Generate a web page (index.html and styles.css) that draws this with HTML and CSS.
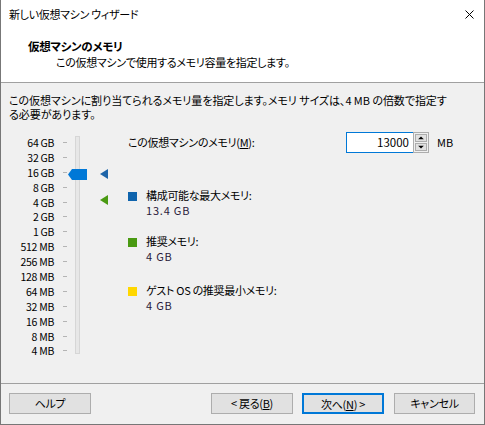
FILE: index.html
```html
<!DOCTYPE html>
<html lang="ja">
<head>
  <meta charset="UTF-8">
  <title>新しい仮想マシン ウィザード</title>
  <link rel="stylesheet" href="styles.css">
</head>
<body>

<div class="window">
  <div class="titlebar">
    <span class="title-text">新しい仮想マシン ウィザード</span>
    <span class="close">
      <svg width="9" height="9" viewBox="0 0 9 9"><path d="M0.5 0.5 L8.5 8.5 M8.5 0.5 L0.5 8.5" stroke="#000" stroke-width="1"/></svg>
    </span>
  </div>

  <div class="header">
    <h2 class="header-title">仮想マシンのメモリ</h2>
    <p class="header-sub">この仮想マシンで使用するメモリ容量を指定します。</p>
  </div>

  <div class="content">
    <p class="intro">この仮想マシンに割り当てられるメモリ量を指定します。メモリ サイズは、4 MB の倍数で指定す<br>る必要があります。</p>

    <div class="main">
      <div class="slider">
        <div class="scale">
          <div class="step"><span>64 GB</span><i></i></div>
          <div class="step"><span>32 GB</span><i></i></div>
          <div class="step"><span>16 GB</span><i></i></div>
          <div class="step"><span>8 GB</span><i></i></div>
          <div class="step"><span>4 GB</span><i></i></div>
          <div class="step"><span>2 GB</span><i></i></div>
          <div class="step"><span>1 GB</span><i></i></div>
          <div class="step"><span>512 MB</span><i></i></div>
          <div class="step"><span>256 MB</span><i></i></div>
          <div class="step"><span>128 MB</span><i></i></div>
          <div class="step"><span>64 MB</span><i></i></div>
          <div class="step"><span>32 MB</span><i></i></div>
          <div class="step"><span>16 MB</span><i></i></div>
          <div class="step"><span>8 MB</span><i></i></div>
          <div class="step"><span>4 MB</span><i></i></div>
        </div>
        <div class="track"></div>
        <svg class="thumb" width="19" height="11" viewBox="0 0 19 11"><path d="M0 5.5 L4 0 H19 V11 H4 Z" fill="#0078d7"/></svg>
        <svg class="mark mark-max" width="8" height="10" viewBox="0 0 8 10"><path d="M0 5 L8 0 V10 Z" fill="#1e64a8"/></svg>
        <svg class="mark mark-rec" width="8" height="10" viewBox="0 0 8 10"><path d="M0 5 L8 0 V10 Z" fill="#4a9a12"/></svg>
      </div>

      <div class="details">
        <div class="mem-row">
          <label class="mem-label">この仮想マシンのメモリ(<u>M</u>):</label>
          <div class="spin">
            <div class="spin-input">13000</div>
            <div class="spin-btns">
              <div class="spin-btn"><svg width="7" height="5" viewBox="0 0 7 5"><path d="M0 4 L3.5 0.5 L7 4 Z" fill="#000"/></svg></div>
              <div class="spin-btn"><svg width="7" height="5" viewBox="0 0 7 5"><path d="M0 1 L3.5 4.5 L7 1 Z" fill="#000"/></svg></div>
            </div>
          </div>
          <span class="unit">MB</span>
        </div>

        <div class="legend">
          <div class="legend-item">
            <span class="swatch blue"></span>
            <div>
              <div class="legend-name">構成可能な最大メモリ:</div>
              <div class="legend-value">13.4 GB</div>
            </div>
          </div>
          <div class="legend-item">
            <span class="swatch green"></span>
            <div>
              <div class="legend-name">推奨メモリ:</div>
              <div class="legend-value">4 GB</div>
            </div>
          </div>
          <div class="legend-item legend-last">
            <span class="swatch yellow"></span>
            <div>
              <div class="legend-name">ゲスト OS の推奨最小メモリ:</div>
              <div class="legend-value">4 GB</div>
            </div>
          </div>
        </div>
      </div>
    </div>
  </div>

  <div class="footer">
    <button class="btn">ヘルプ</button>
    <div class="footer-right">
      <button class="btn">&lt; 戻る(<u>B</u>)</button>
      <button class="btn btn-default">次へ(<u>N</u>) &gt;</button>
      <button class="btn btn-cancel">キャンセル</button>
    </div>
  </div>
</div>

</body>
</html>
```

FILE: styles.css
```css
* {
  box-sizing: border-box;
}
html, body {
  margin: 0;
  padding: 0;
}
body {
  font-family: "Noto Sans CJK JP", "Noto Sans", sans-serif;
  font-size: 11px;
  letter-spacing: -0.3px;
  font-feature-settings: "palt";
  color: #000;
  background: #f0f0f0;
}
.window {
  width: 485px;
  height: 425px;
  border: 1px solid #777;
  border-top: none;
  background: #f0f0f0;
  display: flex;
  flex-direction: column;
}
.titlebar {
  height: 30px;
  background: #fff;
  display: flex;
  align-items: center;
  justify-content: space-between;
  padding: 0 10px 0 8px;
}
.title-text {
  line-height: 1;
  margin-top: -1px;
}
.close {
  display: flex;
  margin-top: -1px;
}
.header {
  height: 53px;
  background: #fff;
  border-bottom: 1px solid #a0a0a0;
  padding: 8px 0 0 27px;
}
.header-title {
  margin: 0;
  font-size: 11.5px;
  font-weight: bold;
  line-height: 16px;
}
.header-sub {
  margin: 0;
  padding-left: 28px;
  line-height: 16px;
}
.content {
  flex: 1;
  padding: 10px 7px 0 8px;
}
.intro {
  margin: 0;
  line-height: 14px;
  letter-spacing: -0.05px;
  white-space: nowrap;
}
.main {
  display: flex;
  margin-top: 12px;
  margin-left: -1px;
}
.slider {
  position: relative;
  width: 118px;
  height: 222px;
}
.scale {
  display: flex;
  flex-direction: column;
  padding-top: 2px;
}
.step {
  display: flex;
  align-items: center;
  height: 14.9px;
  font-size: 10.5px;
}
.step span {
  width: 46px;
  text-align: right;
}
.step i {
  display: block;
  width: 4px;
  height: 1px;
  background: #b4b4b4;
  margin-left: 9px;
}
.track {
  position: absolute;
  left: 67px;
  top: 3px;
  width: 5px;
  height: 218px;
  background: #e7e7e7;
  border: 1px solid #d6d6d6;
}
.thumb {
  position: absolute;
  left: 60px;
  top: 36px;
}
.mark {
  position: absolute;
  left: 92px;
}
.mark-max {
  top: 36px;
}
.mark-rec {
  top: 62px;
}
.details {
  flex: 1;
  padding: 0 23px 0 2px;
}
.mem-row {
  display: flex;
  align-items: center;
  height: 20px;
  margin-top: -1px;
}
.mem-label {
  flex: 1;
}
.spin {
  display: flex;
  align-items: center;
  width: 83px;
}
.spin-input {
  width: 68px;
  height: 21px;
  border: 1px solid #0078d7;
  background: #fff;
  text-align: right;
  padding-right: 4px;
  line-height: 19px;
  font-size: 11.5px;
  letter-spacing: 0;
}
.spin-btns {
  display: flex;
  flex-direction: column;
  width: 16px;
  height: 21px;
  border: 1px solid #adadad;
  padding: 1px;
  gap: 1px;
  margin-left: -1px;
}
.spin-btn {
  flex: 1;
  background: #e1e1e1;
  border: 1px solid #adadad;
  display: flex;
  align-items: center;
  justify-content: center;
}
.spin-btn svg {
  width: 6px;
  height: 4px;
}
.unit {
  width: 17px;
  margin-left: 8px;
  letter-spacing: 0;
}
.legend {
  display: flex;
  flex-direction: column;
  gap: 16px;
  margin-top: 36px;
}
.legend-item {
  display: flex;
  align-items: flex-start;
}
.legend-last {
  margin-top: 3px;
}
.swatch {
  width: 9px;
  height: 9px;
  margin: 4px 9px 0 0;
}
.swatch.blue {
  background: #0f64ad;
}
.swatch.green {
  background: #4a9a12;
}
.swatch.yellow {
  background: #ffd700;
}
.legend-name,
.legend-value {
  line-height: 15px;
}
.legend-value {
  color: #2a1a3a;
  letter-spacing: 0.8px;
}
.footer {
  height: 40px;
  border-top: 1px solid #a0a0a0;
  display: flex;
  justify-content: space-between;
  align-items: center;
  padding: 0 9px 1px 8px;
  margin-bottom: 1px;
}
.footer-right {
  display: flex;
  gap: 9px;
}
.btn {
  width: 82px;
  height: 21px;
  font-family: inherit;
  font-size: 11px;
  letter-spacing: -0.3px;
  font-feature-settings: "palt";
  background: #e1e1e1;
  border: 1px solid #adadad;
  color: #000;
  padding: 0;
  line-height: 19px;
}
.btn-default {
  border: 2px solid #0078d7;
}
.btn-cancel {
  margin-left: 1px;
  width: 81px;
}
```
